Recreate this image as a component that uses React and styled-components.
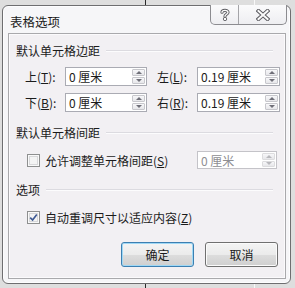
import React from "react";
import styled, { createGlobalStyle } from "styled-components";

const GlobalStyle = createGlobalStyle`
  html, body { margin: 0; padding: 0; }
  body {
    width: 295px; height: 288px; overflow: hidden;
    font-family: "Noto Sans CJK SC", "Noto Sans", sans-serif;
    color: #1b1b1b;
  }
`;

const Desk = styled.div`
  width: 295px; height: 288px; box-sizing: border-box;
  padding: 5px 4px 4px 2px;
  background:
    linear-gradient(to right, transparent 145px, #2a2a2a 145px, #2a2a2a 146px, transparent 146px,
      transparent 254px, #f8f8f8 254px, #f8f8f8 255px, transparent 255px),
    #dedede;
`;

const Window = styled.div`
  height: 100%; box-sizing: border-box;
  border: 1px solid #6e6e70; border-radius: 6px;
  background: #f6f6f8;
  box-shadow: inset 0 0 0 1px #fdfdfe;
  display: flex; flex-direction: column;
  padding: 0 4px 4px 5px;
`;

const TitleBar = styled.div`
  height: 27px; display: flex; align-items: flex-start;
`;

const Title = styled.div`
  font-size: 12.5px; line-height: 16px; padding: 8px 0 0 2px;
`;

const Caption = styled.div`
  margin-left: auto; margin-top: -1px; margin-right: -1px;
  display: flex; height: 19px;
  border: 1px solid #8c8c90; border-top: none;
  border-radius: 0 0 5px 5px; overflow: hidden;
  background: linear-gradient(#fbfbfc, #eeeef1);
`;

const CapBtn = styled.div`
  width: ${p => p.$w}px; display: flex; align-items: center; justify-content: center;
  & + & { border-left: 1px solid #a4a4a8; }
`;

const Client = styled.div`
  flex: 1; border: 1px solid #a9a9ac; background: #f2f0f3;
  box-shadow: inset 0 0 0 1px #fbfafc;
  display: flex; flex-direction: column;
  padding: 8px 7px 0 7px;
`;

const Section = styled.div`
  display: flex; align-items: center; font-size: 12px; line-height: 17px;
  margin-top: ${p => p.$mt}px;
  &::after {
    content: ""; flex: 1; height: 1px; background: #dcdbe0;
    margin-left: 6px; margin-right: 5px; border-bottom: 1px solid #fcfcfd;
  }
`;

const FieldGrid = styled.div`
  display: grid; margin-top: 8px; margin-left: 9px;
  grid-template-columns: 40px 82px 10px 40px 83px;
  grid-auto-rows: 19px; row-gap: 7px; align-items: center;
`;

const Label = styled.span`
  font-size: 12px; white-space: nowrap;
  color: ${p => (p.$dim ? "#8a8a8a" : "#1b1b1b")};
`;

const U = styled.span`text-decoration: underline; text-underline-offset: 1px;`;

const Spin = styled.div`
  height: ${p => p.$h || 19}px; box-sizing: border-box; width: ${p => p.$w || "auto"};
  grid-column: ${p => p.$col || "auto"};
  border: 1px solid ${p => (p.$disabled ? "#c4c3c8" : "#aaabb3")};
  background: #fff; display: flex; align-items: stretch;
  ${p => p.$push && "margin-left: auto; margin-right: 1px;"}
`;

const SpinText = styled.div`
  flex: 1; font-size: 12px; line-height: 17px; padding-left: 3px;
  color: ${p => (p.$disabled ? "#8e8e92" : "#1b1b1b")};
  display: flex; align-items: center; white-space: nowrap;
`;

const Arrows = styled.div`
  width: 14px; display: flex; flex-direction: column; padding: 1px 1px 1px 0; gap: 1px; box-sizing: border-box;
`;

const Arrow = styled.div`
  flex: 1; border: 1px solid ${p => (p.$disabled ? "#dcdcde" : "#c7c7cc")}; border-radius: 1px;
  background: linear-gradient(#f7f7f9, #e7e7ea);
  display: flex; align-items: center; justify-content: center;
  &::before {
    content: ""; width: 0; height: 0;
    border-left: 3px solid transparent; border-right: 3px solid transparent;
    ${p => (p.$down ? "border-top" : "border-bottom")}: 3px solid ${p => (p.$disabled ? "#b8b8bc" : "#6f6f78")};
  }
`;

const CheckRow = styled.div`
  display: flex; align-items: center; height: 18px; margin-top: ${p => p.$mt}px;
  padding-left: 11px;
`;

const Box = styled.div`
  width: 13px; height: 13px; box-sizing: border-box; margin-right: 5px;
  border: 1px solid #8e8f8f; background: #f4f4f4;
  box-shadow: inset 0 0 0 1px #f9f9f9, inset 0 0 0 2px #d8d8da;
  display: flex; align-items: center; justify-content: center;
`;

const Buttons = styled.div`
  margin-top: auto; margin-bottom: 11px; display: flex; justify-content: flex-end; gap: 11px;
`;

const Button = styled.div`
  width: 73px; height: 25px; box-sizing: border-box; border-radius: 3px;
  font-size: 12px; display: flex; align-items: center; justify-content: center;
  border: 1px solid ${p => (p.$default ? "#3c7fb1" : "#707070")};
  background: linear-gradient(#f4f4f4 0%, #ebebeb 50%, #dddddd 51%, #cfcfcf 100%);
  box-shadow: inset 0 0 0 1px ${p => (p.$default ? "#9fd8f5" : "#fbfbfb")};
`;

function SpinBox({ value, col, w, h, disabled, push }) {
  return (
    <Spin $col={col} $w={w} $h={h} $disabled={disabled} $push={push}>
      <SpinText $disabled={disabled}>{value}</SpinText>
      <Arrows>
        <Arrow $disabled={disabled} />
        <Arrow $down $disabled={disabled} />
      </Arrows>
    </Spin>
  );
}

const HelpIcon = () => (
  <svg width="12" height="13" viewBox="0 0 12 13">
    <path d="M3 4.2 C3 1.8 9 1.6 9 4.3 C9 6.2 6 6.3 6 8.3" fill="none" stroke="#5d5d62" strokeWidth="3.2" strokeLinecap="round" />
    <path d="M3 4.2 C3 1.8 9 1.6 9 4.3 C9 6.2 6 6.3 6 8.3" fill="none" stroke="#fafafa" strokeWidth="1.4" strokeLinecap="round" />
    <circle cx="6" cy="11" r="1.7" fill="#fafafa" stroke="#5d5d62" strokeWidth="0.9" />
  </svg>
);

const CloseIcon = () => (
  <svg width="14" height="12" viewBox="0 0 14 12">
    <path d="M2.5 2 L11.5 10 M11.5 2 L2.5 10" stroke="#5d5d62" strokeWidth="4" strokeLinecap="square" />
    <path d="M2.5 2 L11.5 10 M11.5 2 L2.5 10" stroke="#fafafa" strokeWidth="2" strokeLinecap="square" />
  </svg>
);

const CheckMark = () => (
  <svg width="9" height="9" viewBox="0 0 9 9">
    <path d="M1.2 4.6 L3.6 7 L7.8 1.6" fill="none" stroke="#3f5a94" strokeWidth="1.7" />
  </svg>
);

export default function App() {
  return (
    <>
      <GlobalStyle />
      <Desk>
        <Window>
          <TitleBar>
            <Title>表格选项</Title>
            <Caption>
              <CapBtn $w={27}><HelpIcon /></CapBtn>
              <CapBtn $w={47}><CloseIcon /></CapBtn>
            </Caption>
          </TitleBar>
          <Client>
            <Section $mt={0}>默认单元格边距</Section>
            <FieldGrid>
              <Label>上(<U>T</U>):</Label>
              <SpinBox value="0 厘米" col="2" />
              <Label style={{ gridColumn: 4 }}>左(<U>L</U>):</Label>
              <SpinBox value="0.19 厘米" col="5" />
              <Label>下(<U>B</U>):</Label>
              <SpinBox value="0 厘米" col="2" />
              <Label style={{ gridColumn: 4 }}>右(<U>R</U>):</Label>
              <SpinBox value="0.19 厘米" col="5" />
            </FieldGrid>
            <Section $mt={12}>默认单元格间距</Section>
            <CheckRow $mt={10}>
              <Box />
              <Label>允许调整单元格间距(<U>S</U>)</Label>
              <SpinBox value="0 厘米" w="80px" h={18} disabled push />
            </CheckRow>
            <Section $mt={12}>选项</Section>
            <CheckRow $mt={10}>
              <Box><CheckMark /></Box>
              <Label>自动重调尺寸以适应内容(<U>Z</U>)</Label>
            </CheckRow>
            <Buttons>
              <Button $default>确定</Button>
              <Button>取消</Button>
            </Buttons>
          </Client>
        </Window>
      </Desk>
    </>
  );
}
